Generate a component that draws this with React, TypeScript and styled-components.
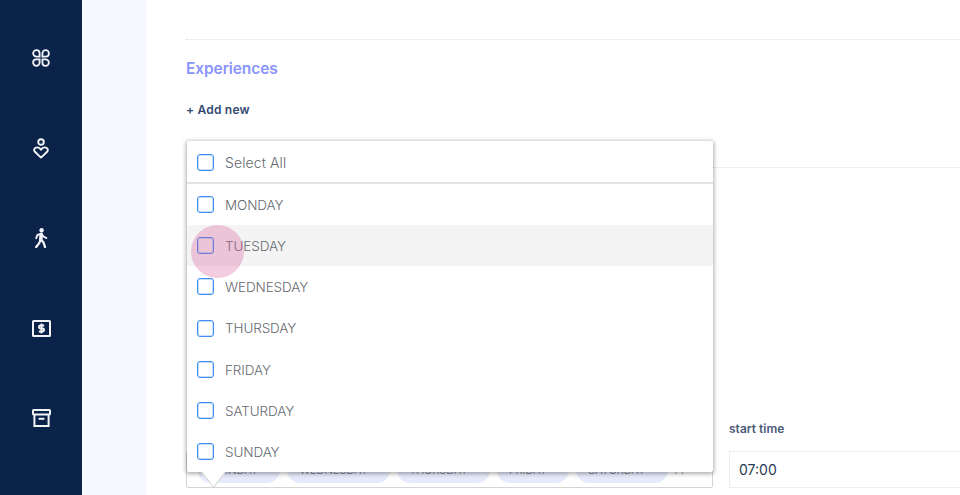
import { createGlobalStyle, styled } from 'styled-components';

const GlobalStyle = createGlobalStyle`
    html, body {
        margin: 0;
        height: 100%;
        overflow: hidden;
        background: #fff;
        font-family: 'Inter', 'Noto Sans', sans-serif;
    }
`;

const Page = styled.div`
    display: flex;
    height: 495px;
    overflow: hidden;
`;

const Sidebar = styled.nav`
    flex: 0 0 82px;
    background: #0c2349;
    color: #f2f4f8;
    padding-top: 13px;
    box-sizing: border-box;
`;

const NavItem = styled.div`
    height: 90px;
    display: grid;
    place-items: center;
`;

const Band = styled.div`
    flex: 0 0 64px;
    background: #f5f8ff;
`;

const Main = styled.main`
    flex: 1;
    min-width: 0;
    padding: 39px 0 0 40px;
`;

const Divider = styled.hr`
    margin: 0;
    border: none;
    border-top: 1px dotted #dfe1e9;
`;

const SectionTitle = styled.h2`
    margin: 19px 0 0;
    font-size: 15.5px;
    line-height: 20px;
    font-weight: 600;
    letter-spacing: -0.1px;
    color: #8a94fd;
`;

const AddNew = styled.button`
    display: block;
    margin: 22px 0 48px;
    padding: 0;
    border: none;
    background: none;
    font: 600 12px/18px 'Inter', sans-serif;
    letter-spacing: 0.2px;
    color: #33496f;
`;

const FieldRow = styled.div`
    display: grid;
    grid-template-columns: 527px 260px;
    column-gap: 16px;
    margin-top: 252px;
`;

const SelectField = styled.div`
    position: relative;
    height: 68px;
    display: flex;
    flex-direction: column;
    justify-content: flex-end;
`;

const SelectBox = styled.div`
    height: 37px;
    box-sizing: border-box;
    border: 1px solid #d5d5d5;
    border-radius: 2px;
    display: flex;
    align-items: center;
    gap: 7px;
    padding: 0 0 0 11px;
    overflow: hidden;
`;

const Chip = styled.span`
    height: 26px;
    padding: 0 12px;
    border-radius: 13px;
    background: #e6ebfb;
    color: #747b8a;
    font-size: 11px;
    font-weight: 300;
    line-height: 26px;
    white-space: nowrap;
`;

const Ellipsis = styled.span`
    color: #8b8f99;
    font-size: 11px;
    letter-spacing: 3px;
`;

const Menu = styled.div`
    position: absolute;
    left: 1px;
    right: 0;
    bottom: 16px;
    background: #fff;
    border-radius: 2px;
    box-shadow: 0 1px 4px 1px rgba(0, 0, 0, 0.32);
`;

const Caret = styled.svg`
    position: absolute;
    left: 14px;
    top: 100%;
`;

const Option = styled.div<{ $head?: boolean; $hover?: boolean; $tall?: boolean }>`
    position: relative;
    display: flex;
    align-items: center;
    gap: 11px;
    height: ${(p) => (p.$head ? '43px' : p.$tall ? '42px' : '41px')};
    padding: ${(p) => (p.$head ? '1px 0 0 10px' : '0 0 0 10px')};
    box-sizing: border-box;
    background: ${(p) => (p.$hover ? '#f4f4f4' : 'transparent')};
    border-bottom: ${(p) => (p.$head ? '2px solid #e2e2e2' : 'none')};
    color: #666a70;
    font-size: ${(p) => (p.$head ? '14px' : '13.5px')};
    font-weight: 300;
    letter-spacing: ${(p) => (p.$head ? '0.1px' : '-0.1px')};
`;

const Check = styled.span`
    width: 17px;
    height: 17px;
    box-sizing: border-box;
    border: 1px solid #3f8ef0;
    border-radius: 3px;
    box-shadow: inset 0 0 0 1px rgba(90, 160, 250, 0.35);
`;

const Ripple = styled.span`
    position: absolute;
    left: 4px;
    top: 0;
    width: 53px;
    height: 53px;
    border-radius: 50%;
    background: rgba(214, 90, 150, 0.3);
`;

const TimeField = styled.div`
    display: flex;
    flex-direction: column;
`;

const TimeLabel = styled.label`
    height: 31px;
    padding-top: 1px;
    box-sizing: border-box;
    font-size: 12px;
    line-height: 16px;
    font-weight: 600;
    color: #4a5a78;
`;

const TimeInput = styled.div`
    height: 37px;
    box-sizing: border-box;
    border: 1px solid #ededf2;
    padding-left: 9px;
    display: flex;
    align-items: center;
    font-size: 14px;
    color: #2b3a55;
`;

const days = ['MONDAY', 'TUESDAY', 'WEDNESDAY', 'THURSDAY', 'FRIDAY', 'SATURDAY', 'SUNDAY'];
const chips = ['MONDAY ×', 'WEDNESDAY ×', 'THURSDAY ×', 'FRIDAY ×', 'SATURDAY ×'];

function PetalsIcon() {
    const petal = 'M4.4 1.1a3.2 3.2 0 0 1 3.2 3.2v3.3H4.4a3.25 3.25 0 0 1 0-6.5z';
    return (
        <svg width="18" height="18" viewBox="0 0 18 18" fill="none" stroke="currentColor" strokeWidth="1.8">
            <path d={petal} />
            <path d={petal} transform="rotate(90 9 9)" />
            <path d={petal} transform="rotate(180 9 9)" />
            <path d={petal} transform="rotate(270 9 9)" />
        </svg>
    );
}

function PersonHeartIcon() {
    return (
        <svg width="16" height="21" viewBox="0 0 16 21" fill="none" stroke="currentColor" strokeWidth="1.9">
            <circle cx="8" cy="4" r="2.8" />
            <path
                d="M8 19.6 1.9 13.8C.2 11.6 1.8 9.2 4.4 9.4 6 9.5 7.2 10.5 8 11.8 8.8 10.5 10 9.5 11.6 9.4 14.2 9.2 15.8 11.6 14.1 13.8z"
                strokeLinejoin="round"
            />
        </svg>
    );
}

function WalkIcon() {
    return (
        <svg width="14" height="20" viewBox="0 0 14 20" fill="none" stroke="currentColor" strokeLinecap="round" strokeLinejoin="round">
            <circle cx="7.6" cy="2.2" r="2.2" fill="currentColor" stroke="none" />
            <path d="M7.2 6.4 6.8 11.6" strokeWidth="3.6" />
            <path d="M2.2 10.2 3.4 7 7.2 5.8 10 8.8 12.4 10" strokeWidth="1.9" />
            <path d="M6.8 11.6 5 15.4 2.2 19" strokeWidth="2.3" />
            <path d="M6.8 11.6 9.4 14.2 11 19" strokeWidth="2.3" />
        </svg>
    );
}

function MoneyIcon() {
    return (
        <svg width="19" height="17" viewBox="0 0 19 17" fill="none" stroke="currentColor">
            <rect x="1" y="1" width="17" height="15" rx="0.5" strokeWidth="2" />
            <path d="M12.2 5.6H8.4a1.4 1.4 0 0 0 0 2.9h2.2a1.4 1.4 0 0 1 0 2.9H6.8" strokeWidth="2" />
            <path d="M9.5 3.6v9.8" strokeWidth="2" />
        </svg>
    );
}

function ArchiveIcon() {
    return (
        <svg width="19" height="18" viewBox="0 0 19 18" fill="none" stroke="currentColor" strokeWidth="2">
            <rect x="1" y="1" width="17" height="4.4" rx="0.6" />
            <path d="M2.4 5.4V17h14.2V5.4" />
            <path d="M6.6 9.8h5.8" />
        </svg>
    );
}

export default function App() {
    return (
        <>
            <GlobalStyle />
            <Page>
                <Sidebar>
                    <NavItem><PetalsIcon /></NavItem>
                    <NavItem><PersonHeartIcon /></NavItem>
                    <NavItem><WalkIcon /></NavItem>
                    <NavItem><MoneyIcon /></NavItem>
                    <NavItem><ArchiveIcon /></NavItem>
                </Sidebar>
                <Band />
                <Main>
                    <Divider />
                    <SectionTitle>Experiences</SectionTitle>
                    <AddNew>+ Add new</AddNew>
                    <Divider />
                    <FieldRow>
                        <SelectField>
                            <SelectBox>
                                {chips.map((chip) => (
                                    <Chip key={chip}>{chip}</Chip>
                                ))}
                                <Ellipsis>..</Ellipsis>
                            </SelectBox>
                            <Menu>
                                <Option $head>
                                    <Check />
                                    Select All
                                </Option>
                                {days.map((day) => (
                                    <Option key={day} $hover={day === 'TUESDAY'} $tall={day === 'THURSDAY'}>
                                        {day === 'TUESDAY' && <Ripple />}
                                        <Check />
                                        {day}
                                    </Option>
                                ))}
                                <Caret width="25" height="16" viewBox="0 0 25 16">
                                    <path d="M0 0h25L12.5 15.5z" fill="#fff" />
                                    <path d="M1 0l11.5 15.5L24 0" fill="none" stroke="#cfcfcf" />
                                </Caret>
                            </Menu>
                        </SelectField>
                        <TimeField>
                            <TimeLabel>start time</TimeLabel>
                            <TimeInput>07:00</TimeInput>
                        </TimeField>
                    </FieldRow>
                </Main>
            </Page>
        </>
    );
}
